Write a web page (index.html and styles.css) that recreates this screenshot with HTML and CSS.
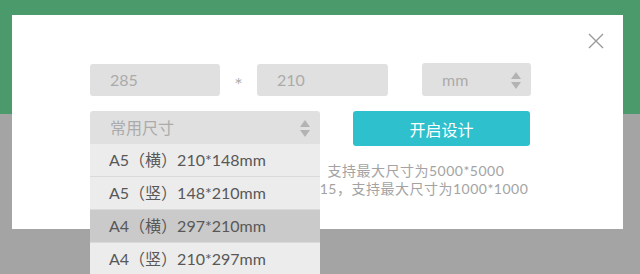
FILE: index.html
```html
<!DOCTYPE html>
<html lang="zh">
<head>
    <meta charset="UTF-8">
    <title>自定义尺寸</title>
    <link rel="stylesheet" href="styles.css">
</head>
<body>
    <div class="backdrop">
        <div class="band"></div>
        <div class="shade"></div>
    </div>

    <div class="modal">
        <span class="close">
            <svg width="16" height="16" viewBox="0 0 16 16"><path d="M1 1 L15 15 M15 1 L1 15" stroke="#9a9a9a" stroke-width="1.4" fill="none"/></svg>
        </span>

        <div class="row size-row">
            <div class="field w-width">285</div>
            <span class="times">*</span>
            <div class="field w-height">210</div>
            <div class="field picker w-unit">mm<i class="arrows"></i></div>
        </div>

        <div class="row preset-row">
            <div class="preset">
                <div class="field picker w-preset">常用尺寸<i class="arrows"></i></div>
                <ul class="options">
                    <li>A5（横）210*148mm</li>
                    <li>A5（竖）148*210mm</li>
                    <li class="active">A4（横）297*210mm</li>
                    <li>A4（竖）210*297mm</li>
                    <li>A3（横）420*297mm</li>
                </ul>
            </div>
            <button class="start">开启设计</button>
        </div>

        <div class="hint">
            <p class="first">单位为像素时，最小尺寸为40*40，支持最大尺寸为5000*5000</p>
            <p class="second">单位为毫米时，最小尺寸为15*15，支持最大尺寸为1000*1000</p>
        </div>
    </div>
</body>
</html>
```

FILE: styles.css
```css
body {
    margin: 0;
    width: 640px;
    height: 274px;
    overflow: hidden;
    font-family: 'Lato', 'Noto Sans CJK SC', sans-serif;
    position: relative;
}

.backdrop {
    display: flex;
    flex-direction: column;
    height: 100%;
}

.band {
    height: 114px;
    background-color: #4b9a6b;
}

.shade {
    flex: 1;
    background-color: #a4a4a4;
}

.modal {
    position: absolute;
    left: 12px;
    top: 15px;
    width: 611px;
    height: 214px;
    box-sizing: border-box;
    padding: 48px 0 0 78px;
    background-color: #ffffff;
}

.close {
    position: absolute;
    right: 19px;
    top: 18px;
    width: 16px;
    height: 16px;
}

.row {
    display: flex;
    align-items: center;
}

.field {
    position: relative;
    height: 32px;
    line-height: 32px;
    padding-left: 20px;
    box-sizing: border-box;
    background-color: #e0e0e0;
    border-radius: 3px;
    color: #ababab;
    font-size: 16px;
}

.w-width { width: 130px; }
.w-height { width: 131px; }
.w-unit { width: 109px; margin-left: 34px; height: 33px; line-height: 33px; }
.w-preset { width: 230px; height: 33px; line-height: 33px; border-radius: 3px 3px 0 0; }

.times {
    width: 37px;
    height: 20px;
    text-align: center;
    color: #b0b0b0;
    font-size: 20px;
    line-height: 20px;
    padding-top: 8px;
}

.arrows {
    position: absolute;
    right: 9px;
    top: 50%;
    width: 11px;
    height: 17px;
    margin-top: -8px;
}

.arrows::before,
.arrows::after {
    content: '';
    position: absolute;
    left: 0;
    border-left: 5.5px solid transparent;
    border-right: 5.5px solid transparent;
}

.arrows::before {
    top: 0;
    border-bottom: 7px solid #b3b3b3;
}

.arrows::after {
    bottom: 0;
    border-top: 7px solid #b3b3b3;
}

.size-row {
    height: 33px;
}

.preset-row {
    margin-top: 15px;
    align-items: flex-start;
}

.preset {
    position: relative;
    z-index: 2;
}

.options {
    position: absolute;
    left: 0;
    top: 33px;
    width: 230px;
    margin: 0;
    padding: 0;
    list-style: none;
    background-color: #ececec;
}

.options li {
    height: 32px;
    line-height: 31px;
    padding-left: 19px;
    border-bottom: 1px solid #dadada;
    color: #585858;
    font-size: 16px;
    white-space: nowrap;
}

.options li.active {
    background-color: #cacaca;
}

.start {
    width: 177px;
    height: 35px;
    margin-left: 33px;
    border: none;
    border-radius: 3px;
    background-color: #2ec0cd;
    color: #ffffff;
    font-family: inherit;
    font-size: 16px;
    cursor: pointer;
}

.hint {
    margin-top: 16px;
    color: #a3a3a3;
    font-size: 14px;
    line-height: 18px;
    letter-spacing: 0.5px;
}

.hint p {
    margin: 0;
    white-space: nowrap;
}

.hint .first {
    padding-left: 8px;
}

.hint .second {
    padding-left: 32px;
}
```
